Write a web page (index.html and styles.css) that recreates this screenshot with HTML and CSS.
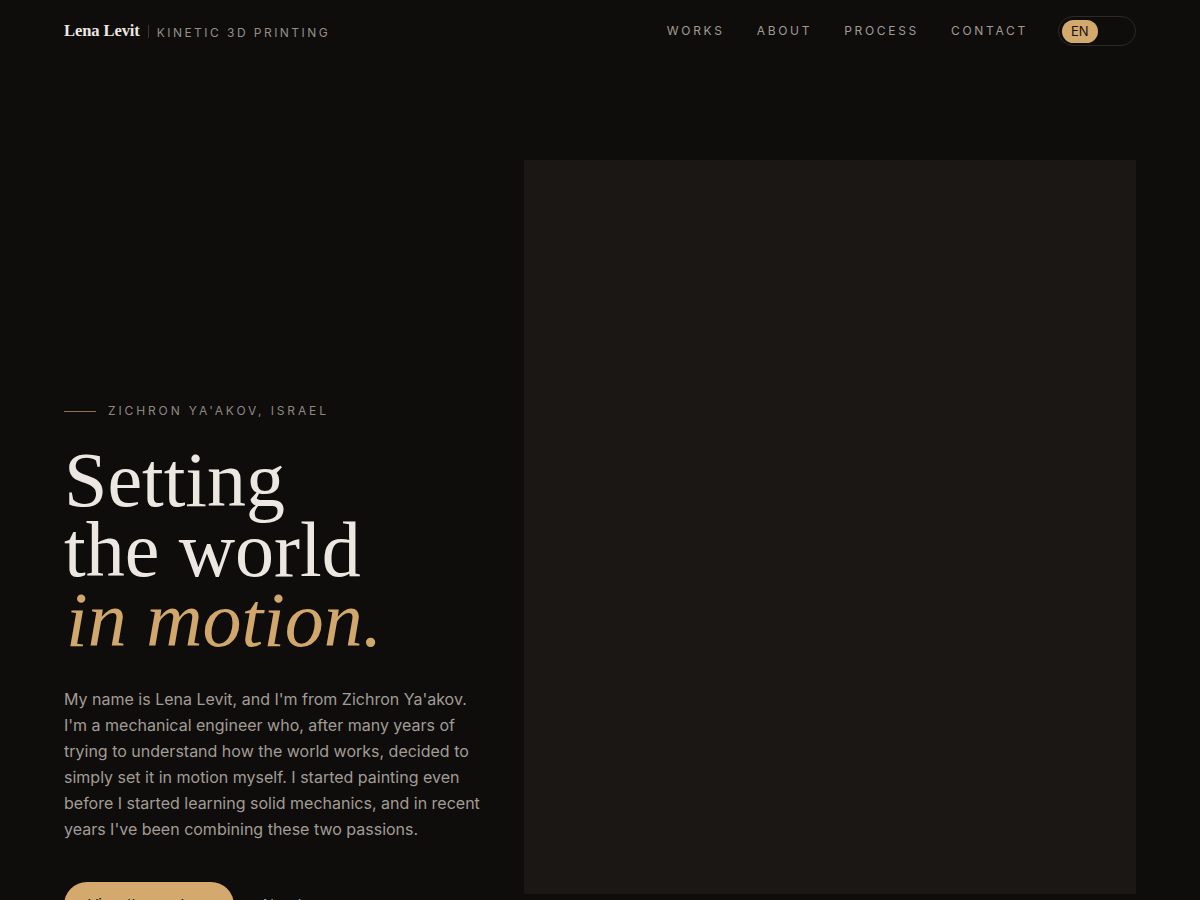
FILE: index.html
```html
<!DOCTYPE html>
<html lang="en">
  <head>
    <meta charset="utf-8" />
    <title>Lena Levit — Kinetic 3D Printing</title>
    <link rel="stylesheet" href="styles.css">
  </head>
  <body>
    <header class="topbar">
      <a class="brand" href="#">
        <span class="brand-name">Lena Levit</span>
        <span class="brand-sep"></span>
        <span class="brand-tag">Kinetic 3D Printing</span>
      </a>
      <nav class="nav">
        <a href="#works">Works</a>
        <a href="#about">About</a>
        <a href="#process">Process</a>
        <a href="#contact">Contact</a>
        <div class="lang">
          <button class="lang-btn active">EN</button>
          <button class="lang-btn">עב</button>
        </div>
      </nav>
    </header>

    <section class="hero">
      <div class="hero-text">
        <p class="eyebrow"><span class="eyebrow-line"></span>Zichron Ya'akov, Israel</p>
        <h1 class="title">Setting<br>the world<br><em>in motion.</em></h1>
        <p class="intro">My name is Lena Levit, and I'm from Zichron Ya'akov. I'm a mechanical engineer who, after many years of trying to understand how the world works, decided to simply set it in motion myself. I started painting even before I started learning solid mechanics, and in recent years I've been combining these two passions.</p>
        <div class="actions">
          <a class="btn-primary" href="#works">View the works</a>
          <a class="btn-link" href="#about">About me</a>
        </div>
      </div>
      <div class="hero-media"></div>
    </section>
  </body>
</html>
```

FILE: styles.css
```css
* { box-sizing: border-box; }

body {
    margin: 0;
    background: #0e0d0c;
    color: #ece7e1;
    font-family: Inter, "Noto Sans", sans-serif;
}

a { text-decoration: none; color: inherit; }

/* header */
.topbar {
    display: flex;
    align-items: center;
    justify-content: space-between;
    height: 62px;
    padding: 0 64px;
}

.brand { display: flex; align-items: center; }
.brand-name {
    font-family: "Liberation Serif", "Times New Roman", serif;
    font-weight: bold;
    font-size: 16.5px;
    color: #ece7e1;
    letter-spacing: -0.005em;
}
.brand-sep {
    width: 1px; height: 13px;
    background: #3a3632;
    margin: 0 8px;
}
.brand-tag {
    font-size: 12px;
    letter-spacing: 0.205em;
    text-transform: uppercase;
    color: #948e87;
    margin-top: 2px;
}

.nav { display: flex; align-items: center; gap: 32px; }
.nav > a {
    font-size: 12px;
    letter-spacing: 0.225em;
    text-transform: uppercase;
    color: #a19b94;
    margin-top: -2px;
}
.nav > a:nth-child(4) { margin-right: -2px; }

.lang {
    display: flex;
    align-items: center;
    width: 78px; height: 30px;
    padding: 3px;
    border: 1px solid #2c2926;
    border-radius: 15px;
}
.lang-btn {
    border: 0;
    background: transparent;
    font-family: inherit;
    font-size: 13px;
    color: #0e0d0c;
    height: 23px;
    padding: 0 9px;
    border-radius: 12px;
}
.lang-btn.active { background: #d3a96e; color: #1a1510; }

/* hero */
.hero {
    display: grid;
    grid-template-columns: 420px 612px;
    gap: 40px;
    padding: 98px 64px 0;
}

.hero-text { padding-top: 243px; }

.eyebrow {
    display: flex;
    align-items: center;
    margin: 0;
    font-size: 12px;
    line-height: 16px;
    letter-spacing: 0.24em;
    text-transform: uppercase;
    color: #8e8881;
}
.eyebrow-line {
    width: 32px; height: 1px;
    background: #8c7352;
    margin-right: 12px;
}

.title {
    margin: 26px 0 0;
    font-family: "Liberation Serif", "Times New Roman", serif;
    font-weight: normal;
    font-size: 78px;
    line-height: 70px;
    color: #ece7e1;
}
.title em { color: #d1a76b; margin-left: 2px; }

.intro {
    margin: 31px 0 0;
    font-size: 16px;
    line-height: 26px;
    color: #a29c95;
}

.actions {
    display: flex;
    align-items: flex-start;
    gap: 26px;
    margin-top: 40px;
}
.btn-primary {
    display: inline-block;
    padding: 13px 24px;
    line-height: 20px;
    width: 170px;
    border-radius: 23px;
    background: #d3a96e;
    color: #1a1510;
    font-size: 15px;
}
.btn-link {
    font-size: 15px;
    line-height: 20px;
    padding-top: 13px;
    color: #a29c95;
}

.hero-media {
    height: 734px;
    background: #1a1715;
}
```
